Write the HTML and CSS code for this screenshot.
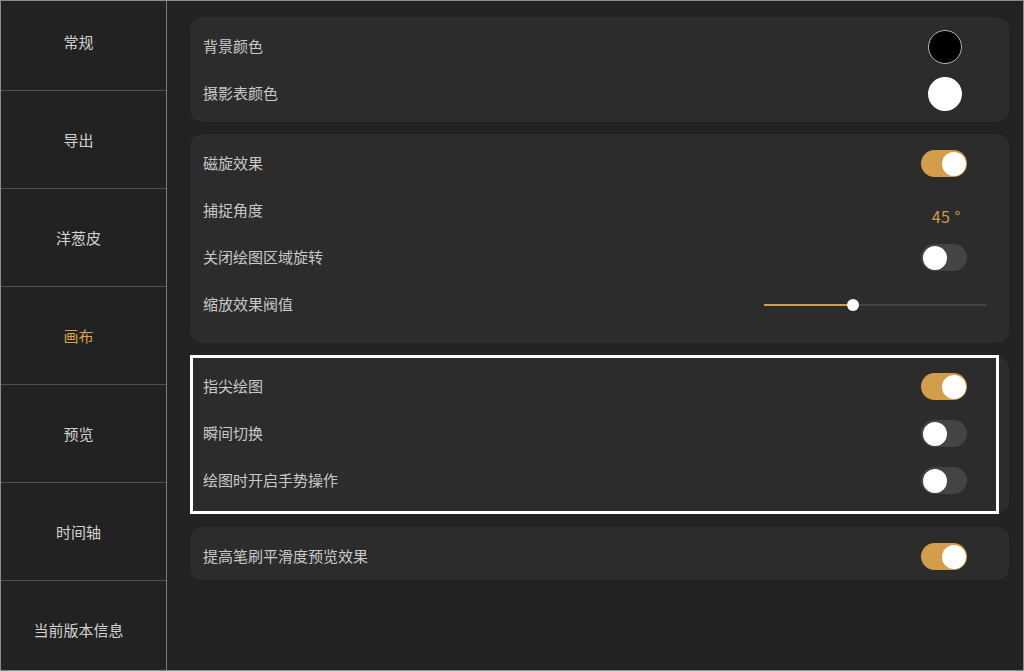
FILE: index.html
```html
<!DOCTYPE html>
<html lang="zh-CN">
<head>
    <meta charset="UTF-8">
    <meta name="viewport" content="width=device-width, initial-scale=1.0">
    <title>画布设置</title>
    <link rel="stylesheet" href="styles.css">
</head>
<body>
<div class="frame">
    <nav class="sidebar">
        <ul class="menu">
            <li>常规</li>
            <li>导出</li>
            <li>洋葱皮</li>
            <li class="active">画布</li>
            <li>预览</li>
            <li>时间轴</li>
            <li>当前版本信息</li>
        </ul>
    </nav>

    <main class="content">
        <section class="card card-colors">
            <div class="row">
                <span class="label">背景颜色</span>
                <span class="swatch swatch-black"></span>
            </div>
            <div class="row">
                <span class="label">摄影表颜色</span>
                <span class="swatch swatch-white"></span>
            </div>
        </section>

        <section class="card card-canvas">
            <div class="row">
                <span class="label">磁旋效果</span>
                <span class="toggle on"></span>
            </div>
            <div class="row">
                <span class="label">捕捉角度</span>
                <span class="value">45 °</span>
            </div>
            <div class="row">
                <span class="label">关闭绘图区域旋转</span>
                <span class="toggle"></span>
            </div>
            <div class="row">
                <span class="label">缩放效果阀值</span>
                <div class="slider">
                    <div class="slider-fill" style="width: 40%"></div>
                    <div class="slider-knob" style="left: 40%"></div>
                </div>
            </div>
        </section>

        <section class="card card-touch">
            <div class="row">
                <span class="label">指尖绘图</span>
                <span class="toggle on"></span>
            </div>
            <div class="row">
                <span class="label">瞬间切换</span>
                <span class="toggle"></span>
            </div>
            <div class="row">
                <span class="label">绘图时开启手势操作</span>
                <span class="toggle"></span>
            </div>
            <div class="highlight"></div>
        </section>

        <section class="card card-brush">
            <div class="row">
                <span class="label">提高笔刷平滑度预览效果</span>
                <span class="toggle on"></span>
            </div>
        </section>
    </main>
</div>
</body>
</html>
```

FILE: styles.css
```css
* {
    box-sizing: border-box;
}
body {
    margin: 0;
    padding: 0;
    background-color: #222;
    font-family: "Noto Sans CJK SC", "Noto Sans", sans-serif;
}
.frame {
    width: 1024px;
    height: 671px;
    border: 1px solid #8c8c8c;
    background-color: #222;
    display: flex;
    overflow: hidden;
}
.sidebar {
    width: 166px;
    flex-shrink: 0;
    border-right: 1px solid #7a7a7a;
    overflow: hidden;
}
.menu {
    list-style: none;
    margin: -8px 0 0 0;
    padding: 0;
}
.menu li {
    height: 98px;
    border-bottom: 1px solid #505050;
    padding: 0 10px 1px 0;
    display: flex;
    align-items: center;
    justify-content: center;
    font-size: 15px;
    color: #d2d2d2;
}
.menu li.active {
    color: #d9a24b;
}
.content {
    flex: 1;
    padding: 16px 14px 0 23px;
    display: flex;
    flex-direction: column;
    gap: 14px;
}
.card {
    position: relative;
    background-color: #2c2c2c;
    border-radius: 12px;
    padding: 6px 42px 5px 13px;
}
.card-colors {
    margin-bottom: -2px;
}
.card-canvas {
    padding-bottom: 15px;
}
.card-touch {
    padding-bottom: 9px;
}
.card-brush {
    padding-bottom: 0;
}
.row {
    height: 47px;
    display: flex;
    align-items: center;
    justify-content: space-between;
}
.label {
    font-size: 15px;
    color: #c9c9c9;
    margin-top: -2px;
}
.swatch {
    width: 34px;
    height: 34px;
    border-radius: 50%;
    margin-right: 5px;
}
.swatch-black {
    background-color: #000;
    border: 1.5px solid #b5b5b5;
}
.swatch-white {
    background-color: #fff;
}
.value {
    font-size: 16px;
    letter-spacing: 0.5px;
    color: #d19c48;
    margin-right: 6px;
    margin-top: 10px;
}
.toggle {
    position: relative;
    width: 46px;
    height: 27px;
    border-radius: 14px;
    background-color: #444446;
}
.toggle::after {
    content: "";
    position: absolute;
    top: 1.5px;
    left: 1.5px;
    width: 24px;
    height: 24px;
    border-radius: 50%;
    background-color: #fff;
}
.toggle.on {
    background-color: #d29e4b;
}
.toggle.on::after {
    left: 20.5px;
}
.slider {
    position: relative;
    width: 222px;
    height: 2px;
    background-color: #444;
    margin-right: -19px;
}
.slider-fill {
    height: 2px;
    background-color: #d29e4b;
}
.slider-knob {
    position: absolute;
    top: -5px;
    width: 12px;
    height: 12px;
    margin-left: -6px;
    border-radius: 50%;
    background-color: #fff;
}
.highlight {
    position: absolute;
    top: -2px;
    left: 0;
    right: 10px;
    bottom: -1px;
    border: 3px solid #fff;
}
```
